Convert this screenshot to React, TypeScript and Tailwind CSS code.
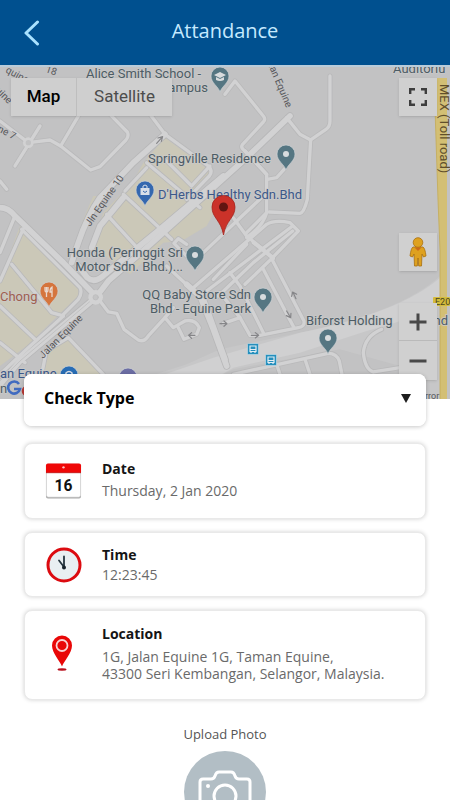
import { useState } from "react";
import type { ReactNode } from "react";

const CHECK_TYPES = ["Check In", "Check Out"];

// Road and block outlines are drawn on a grid three times finer than the map
const MINOR_ROADS = [
  "M0 165 L85 230 L150 222 L182 240 L272 312 L300 302 L378 222 Q388 210 382 198 L330 145",
  "M182 240 L238 145",
  "M450 145 L495 205 L625 300 Q640 315 628 330 L560 400",
  "M0 345 L20 370",
  "M440 290 L600 425",
  "M630 300 L575 360 L500 285",
  "M370 385 L515 520",
  "M320 445 L425 560",
  "M375 375 L440 305",
  "M675 85 L705 45 L790 150 Q798 160 790 168 L728 235 Q720 245 735 255 L800 325",
  "M860 155 L900 205 L932 222 L978 190 Q990 182 990 165 V30",
  "M932 222 L922 400 Q912 440 900 442 L808 438",
  "M735 255 L800 325 V440 Q790 480 740 515",
  "M802 340 L830 335 L857 305",
  "M700 455 L740 510 L820 575",
  "M740 500 L800 440",
  "M610 560 L700 475 L790 390",
  "M560 535 L535 518 L522 532 L590 600",
  "M500 600 L580 675",
  "M580 665 L800 475 Q825 460 870 470 L895 495 L815 578 L735 655",
  "M600 690 L878 480",
  "M655 690 L760 590 L878 495",
  "M640 640 L740 535",
  "M690 620 L720 660 L790 800",
  "M760 530 L820 578",
  "M815 578 L912 765 Q915 782 895 785 L780 808 L750 808 L720 755 L670 772",
  "M790 610 L882 785",
  "M660 680 L720 755",
  "M300 705 L325 738 L350 742 L372 790 L415 822 Q432 830 445 810 L495 755 L520 785 L555 765 Q585 758 598 785 L590 805 L552 820 L535 785",
  "M495 755 L520 725",
  "M70 488 L0 645",
  "M65 490 L240 665 Q248 680 235 700 L190 745",
  "M35 595 L155 740 L190 750",
  "M0 720 L105 820",
  "M0 830 L75 890",
  "M190 750 L80 850 L0 925",
  "M45 450 L0 560",
  "M130 860 L205 815 L310 925",
  "M140 850 L125 925",
  "M120 180 L45 300",
  "M700 925 L985 862 Q1010 862 1018 885 L1028 935",
  "M915 880 L930 925",
  "M830 895 L840 925",
  "M1145 790 Q1095 810 1090 860 Q1095 910 1120 918 L1200 905",
];

const MAJOR_ROADS = [
  "M495 205 L400 290 L300 395 Q262 450 235 530 L215 590",
  "M0 425 Q25 425 45 450 L190 590 L287 690",
  "M0 955 L60 885 L287 695 L325 645 L440 545 L740 275 L870 150",
  "M235 600 L262 635 Q285 655 315 625 L480 490 L670 330",
  "M275 545 L300 480 L370 395",
  "M560 655 L610 700 L675 880",
  "M600 690 L640 790 L680 900",
];

const BLOCKS = [
  "M495 215 L635 318 L590 375 L665 400 L620 480 L545 525 L490 530 L390 625 L350 595 L275 540 L310 440 L400 345 L430 290Z",
  "M60 480 L235 660 L235 690 L80 840 L0 900 V640Z",
  "M205 820 L300 925 H125 L140 865Z",
  "M300 390 L235 530 L250 460 L280 390Z",
];

type PlacePinProps = { x: number; y: number; color: string; children?: ReactNode };

// x,y is the centre of the round head
function PlacePin({ x, y, color, children }: PlacePinProps) {
  return (
    <g transform={`translate(${x} ${y})`}>
      <path d="M0 15 C-2 9 -9 6 -9 -1 A9 9 0 1 1 9 -1 C9 6 2 9 0 15Z" fill={color} stroke="#ced3d6" strokeWidth="0.7" />
      {children ?? <circle cy="-1" r="3" fill="#d8dcde" />}
    </g>
  );
}

function BusStop({ x, y }: { x: number; y: number }) {
  return (
    <g transform={`translate(${x} ${y})`}>
      <rect x="-5.5" y="-5.5" width="11" height="11" rx="1" fill="#258fbd" stroke="#cfe2eb" strokeWidth="0.6" />
      <path d="M-3 -3 H3 V2.5 H-3Z M-2 2.5 V4 M2 2.5 V4" fill="none" stroke="#e2edf2" strokeWidth="1.2" />
      <path d="M-3 0.5 H3" stroke="#e2edf2" />
    </g>
  );
}

function MapCanvas() {
  return (
    <svg
      viewBox="0 67 450 332"
      preserveAspectRatio="xMidYMid slice"
      className="block h-full w-full font-['Roboto',sans-serif]"
      role="img"
      aria-label="Map of Taman Equine"
    >
      <rect y="65" width="450" height="334" fill="#c2c2c3" />
      <g transform="translate(0 66) scale(0.3333)" fill="none" strokeLinejoin="round" strokeLinecap="round">
        {BLOCKS.map((d) => (
          <path key={d} d={d} fill="#cbc8b8" />
        ))}
        <path
          d="M420 940 L560 895 L660 850 L900 800 Q1200 740 1320 630 V1000 H1200 V900 L1020 850 L700 910 L640 940Z"
          fill="#c7c7c8"
        />
        <path d="M480 930 L640 875 L900 800 Q1200 740 1320 635 V720 Q1200 770 1100 795 L900 860 L700 905 L640 940Z" fill="#d0d0d1" />
        {MINOR_ROADS.map((d) => (
          <path key={d} d={d} stroke="#b9b9ba" strokeWidth="15" />
        ))}
        {MAJOR_ROADS.map((d) => (
          <path key={d} d={d} stroke="#b7b7b8" strokeWidth="22" />
        ))}
        {MINOR_ROADS.map((d) => (
          <path key={d} d={d} stroke="#d2d2d3" strokeWidth="10" />
        ))}
        {MAJOR_ROADS.map((d) => (
          <path key={d} d={d} stroke="#d2d2d3" strokeWidth="17" />
        ))}
        <path d="M0 945 L60 885 L280 698" stroke="#b9b9ba" strokeWidth="2" />
        <circle cx="85" cy="230" r="12" fill="#c2c2c3" stroke="#d2d2d3" strokeWidth="8" />
        <circle cx="287" cy="694" r="22" fill="#d2d2d3" />
        <circle cx="287" cy="694" r="8" fill="#c4c4c5" stroke="#bababb" strokeWidth="2" />
        <g stroke="#858588" strokeWidth="3.5">
          <path d="M470 232 L486 214 M474 216 L488 212 L484 226" />
          <path d="M660 773 H680 M672 765 L681 773 L672 781" />
          <path d="M754 808 H775 M766 800 L776 808 L766 816" />
          <path d="M860 735 L871 754 M859 749 L872 755 L873 742" />
          <path d="M888 698 L879 679 M875 691 L878 678 L890 685" />
          <path d="M585 808 H567 M575 800 L566 808 L575 817" />
        </g>
      </g>

      <path d="M434 78 H447 V399 H440 V250 L438 200Z" fill="#d3bf74" />
      <path d="M434 78 L438 200 L440 250 V399" fill="none" stroke="#c4ab57" strokeWidth="0.8" />
      <rect x="433" y="297" width="17" height="9" rx="1" fill="#d3bc3c" />

      <g fill="#56565a" fontSize="10">
        <text transform="translate(5 72) rotate(28)">quine</text>
        <text transform="translate(45 72) rotate(18)">18</text>
        <text transform="translate(-9 87) rotate(45)">quine</text>
        <text transform="translate(-3 131) rotate(28)">ne 7</text>
        <text transform="translate(90 227) rotate(-55)">Jln Equine 10</text>
        <text transform="translate(43 359) rotate(-45)">Jalan Equine</text>
        <text transform="translate(266 60) rotate(67)">man Equine</text>
        <text x="425" y="399" fontSize="9">rror</text>
        <text x="435" y="305" fontSize="9" fill="#4c4521">E20</text>
      </g>
      <text transform="translate(440 84) rotate(90)" fontSize="13" fill="#604f2c">MEX (Toll road)</text>

      <g fontSize="13" fill="#4d5c65" stroke="#cacaca" strokeWidth="1.5" paintOrder="stroke" strokeLinejoin="round">
        <text x="86" y="78">Alice Smith School -</text>
        <text x="208" y="92" textAnchor="end">Campus</text>
        <text x="393" y="73">Auditoriu</text>
        <text x="148" y="163">Springville Residence</text>
        <text x="158" y="199" fill="#3c5889">D'Herbs Healthy Sdn.Bhd</text>
        <text x="183" y="257" textAnchor="end">Honda (Peringgit Sri</text>
        <text x="183" y="271" textAnchor="end">Motor Sdn. Bhd.)...</text>
        <text x="251" y="299" textAnchor="end">QQ Baby Store Sdn</text>
        <text x="251" y="313" textAnchor="end">Bhd - Equine Park</text>
        <text x="306" y="325">Biforst Holding</text>
        <text x="448" y="325" textAnchor="end">nd</text>
        <text x="0" y="301" fill="#a0604d">Chong</text>
        <text x="0" y="378" fill="#3c5889">an Equine</text>
        <text x="0" y="393" fill="#4d5c65">n</text>
      </g>

      <PlacePin x={220} y={77} color="#557682">
        <path d="M-6 -2 L0 -5 L6 -2 L0 1Z M-4 0 V3 Q0 5 4 3 V0 L0 2Z" fill="#d8dcde" />
      </PlacePin>
      <PlacePin x={286} y={155} color="#557682" />
      <PlacePin x={195} y={256} color="#557682" />
      <PlacePin x={263} y={298} color="#557682" />
      <PlacePin x={328} y={339} color="#557682" />
      <PlacePin x={145} y={191} color="#3568af">
        <path d="M-4.500 -3 H4.500 V4 H-4.500Z" fill="#d9dfe8" />
        <path d="M-2 -3 V-5 Q0 -7 2 -5 V-3" fill="none" stroke="#d9dfe8" />
        <path d="M-2 0 Q0 3 2 0" fill="none" stroke="#3568af" />
      </PlacePin>
      <PlacePin x={49} y={292} color="#d5753d">
        <path
          d="M-4 -5 V-2 Q-4 0 -2.500 0 Q-1 0 -1 -2 V-5 M-2.500 -5 V5 M3 5 V-5 Q1 -4 1 0 H3"
          fill="none"
          stroke="#ead8cd"
          strokeWidth="1.3"
        />
      </PlacePin>
      <PlacePin x={69} y={376} color="#286db5">
        <path d="M-3 0 V-3 Q0 -6 3 -3 V0" fill="none" stroke="#d9dfe8" strokeWidth="1.5" />
      </PlacePin>
      <PlacePin x={128} y={378} color="#6c6ea4">
        <path d="M-3 -4 H3 V0 H-3Z" fill="#d5d5e4" />
      </PlacePin>
      <BusStop x={253} y={349} />
      <BusStop x={271} y={360} />

      <g fill="none" strokeWidth="2.6">
        <path d="M19 384 A6 6 0 1 0 20 389 H14" stroke="#416bc0" />
        <circle cx="27" cy="391" r="4" stroke="#bb3a35" />
      </g>

      <path
        d="M223.500 235 C221 220 212 218 212 207 A11.500 11.500 0 0 1 235 207 C235 218 226 220 223.500 235Z"
        fill="#cb3229"
        stroke="#a3261f"
        strokeWidth="0.8"
      />
      <circle cx="223.500" cy="207" r="4.500" fill="#611511" />
    </svg>
  );
}

function MapControls() {
  return (
    <>
      <div className="absolute left-[11px] top-[11px] flex h-[38px] divide-x divide-[#bebebe] bg-[#cfcfcf] font-['Roboto',sans-serif] text-[17px] shadow-sm">
        <button type="button" className="w-[66px] font-medium text-black">
          Map
        </button>
        <button type="button" className="w-[95px] text-[#4c4c4c]">
          Satellite
        </button>
      </div>

      <button
        type="button"
        aria-label="Toggle fullscreen"
        className="absolute right-[13px] top-[11px] flex size-[38px] items-center justify-center bg-[#d0d0d0] shadow-sm"
      >
        <svg viewBox="0 0 18 18" className="size-[18px]" fill="none" stroke="#3d3d3d" strokeWidth="2.4">
          <path d="M1.200 6 V1.200 H6 M12 1.200 H16.800 V6 M16.800 12 V16.800 H12 M6 16.800 H1.200 V12" />
        </svg>
      </button>

      <button
        type="button"
        aria-label="Street view"
        className="absolute right-[13px] top-[166px] flex size-[38px] items-center justify-center bg-[#d0d0d0] shadow-sm"
      >
        <svg viewBox="0 0 18 30" className="h-[30px] w-[18px]" stroke="#a87010" strokeWidth="0.8">
          <path d="M4 10 H14 Q16 11 17 19 L14.500 20 L13 17 L12.500 29 H9.700 L9 21 L8.300 29 H5.500 L5 17 L3.500 20 L1 19 Q2 11 4 10Z" fill="#dea11f" />
          <circle cx="9" cy="5.500" r="4.800" fill="#dea11f" />
          <path d="M5.500 10.500 H12.500 L9 14Z" fill="#cb6a18" stroke="none" />
        </svg>
      </button>

      <div className="absolute right-[13px] top-[236px] flex w-[38px] flex-col divide-y divide-[#bababa] bg-[#d0d0d0] shadow-sm">
        <button type="button" aria-label="Zoom in" className="flex h-[38px] items-center justify-center">
          <svg viewBox="0 0 18 18" className="size-[18px]" stroke="#484848" strokeWidth="3">
            <path d="M0.500 9 H17.500 M9 0.500 V17.500" />
          </svg>
        </button>
        <button type="button" aria-label="Zoom out" className="flex h-[39px] items-center justify-center">
          <svg viewBox="0 0 18 18" className="size-[18px]" stroke="#484848" strokeWidth="3">
            <path d="M0.500 9 H17.500" />
          </svg>
        </button>
      </div>
    </>
  );
}

function CalendarIcon() {
  return (
    <svg viewBox="0 0 38 38" className="size-[38px]" aria-hidden="true">
      <rect x="1" y="2" width="36" height="35" rx="2" fill="#a9a9a9" />
      <rect x="1.500" y="1.500" width="35" height="34" rx="2" fill="#fff" stroke="#d9d9d9" strokeWidth="0.7" />
      <path d="M1 10.500 V3 Q1 1 3 1 H35 Q37 1 37 3 V10.500Z" fill="#ef0707" />
      <path d="M1 10.500 H37" stroke="#b30606" strokeWidth="0.7" />
      <circle cx="19" cy="5" r="1.200" fill="#ffc4c4" />
      <text x="19" y="29" textAnchor="middle" fontSize="16" fontWeight="700" fill="#111" className="font-['Roboto',sans-serif]">
        16
      </text>
    </svg>
  );
}

function ClockIcon() {
  return (
    <svg viewBox="0 0 36 36" className="size-9" aria-hidden="true">
      <circle cx="18" cy="18" r="16" fill="#e9eff2" stroke="#dc0b10" strokeWidth="3" />
      <path d="M18 20 V9.500 M18 20 L13 13.500" stroke="#263640" strokeWidth="1.800" strokeLinecap="round" />
      <circle cx="18" cy="20.500" r="2" fill="#17232b" />
    </svg>
  );
}

function LocationIcon() {
  return (
    <svg viewBox="0 0 26 36" className="h-9 w-[26px]" aria-hidden="true">
      <path d="M11 31.500 C9 26 1 18 1 10.500 A10 10 0 0 1 21 10.500 C21 18 13 26 11 31.500Z" fill="#e90707" />
      <circle cx="11" cy="10.500" r="5.500" fill="#e90707" stroke="#f9d3d3" strokeWidth="1.800" />
      <ellipse cx="11" cy="34.500" rx="4.500" ry="1.200" fill="#b80d1b" />
    </svg>
  );
}

interface InfoCardProps {
  icon: ReactNode;
  title: string;
  className: string;
  children: ReactNode;
}

function InfoCard({ icon, title, className, children }: InfoCardProps) {
  return (
    <section className={`flex items-center rounded-lg border border-[#e9e9e9] bg-white pl-5 pr-4 shadow-[0_0_4px_rgba(0,0,0,0.18)] ${className}`}>
      <div className="flex w-[37px] shrink-0 justify-center">{icon}</div>
      <div className="ml-5 min-w-0">
        <h2 className="text-sm font-bold text-[#151515]">{title}</h2>
        {children}
      </div>
    </section>
  );
}

export default function App() {
  const [checkType, setCheckType] = useState("");

  return (
    <div className="min-h-screen bg-white font-['Open_Sans',sans-serif]">
      <header className="grid h-[65px] grid-cols-[64px_1fr_64px] items-center bg-[#00508f] text-[#c5eaff]">
        <button type="button" aria-label="Back" className="flex h-full items-center justify-center">
          <svg viewBox="0 0 16 26" className="h-[26px] w-4" fill="none" stroke="#a9e2ff" strokeWidth="3" strokeLinecap="round" strokeLinejoin="round">
            <path d="M13.500 2 L2 13 L13.500 24" />
          </svg>
        </button>
        <h1 className="pb-1 text-center text-xl">Attandance</h1>
      </header>

      <main>
        <div className="relative h-[334px] overflow-hidden border-t-2 border-[#b9ccda]">
          <MapCanvas />
          <MapControls />
        </div>

        <div className="relative -mt-[25px] flex flex-col gap-[13px] px-6">
          <div className="relative mb-1 rounded-lg bg-white shadow-[0_1px_4px_rgba(0,0,0,0.22)]">
            <select
              aria-label="Check Type"
              value={checkType}
              onChange={(e) => setCheckType(e.target.value)}
              className="h-[52px] w-full appearance-none rounded-lg bg-white pb-1 pl-5 pr-10 text-base font-bold text-black"
            >
              <option value="">Check Type</option>
              {CHECK_TYPES.map((type) => (
                <option key={type} value={type}>
                  {type}
                </option>
              ))}
            </select>
            <svg viewBox="0 0 10 9" className="pointer-events-none absolute right-[15px] top-5 h-[9px] w-[10px]" aria-hidden="true">
              <path d="M0 0 H10 L5 9Z" fill="#1d1d1d" />
            </svg>
          </div>

          <InfoCard icon={<CalendarIcon />} title="Date" className="h-[76px]">
            <p className="text-sm leading-6 text-[#6a6a6a]">Thursday, 2 Jan 2020</p>
          </InfoCard>

          <InfoCard icon={<ClockIcon />} title="Time" className="h-[65px]">
            <p className="text-sm text-[#6a6a6a]">12:23:45</p>
          </InfoCard>

          <InfoCard icon={<LocationIcon />} title="Location" className="h-[90px] pb-1">
            <p className="mt-1 text-sm leading-[17px] text-[#6a6a6a]">
              1G, Jalan Equine 1G, Taman Equine,
              <br />
              43300 Seri Kembangan, Selangor, Malaysia.
            </p>
          </InfoCard>
        </div>

        <button type="button" className="mx-auto mt-6 flex flex-col items-center gap-[7px] text-[13px] leading-5 text-[#555]">
          Upload Photo
          <span className="flex size-[82px] items-center justify-center rounded-full bg-[#b2bec5]">
            <svg viewBox="0 0 54 44" className="h-11 w-[54px]" fill="none" stroke="#fff" strokeWidth="3" strokeLinejoin="round" aria-hidden="true">
              <path d="M5 9 H13 Q16 9 17 6 Q18 2 21 2 H33 Q36 2 37 6 Q38 9 41 9 H49 Q52 9 52 12 V39 Q52 42 49 42 H5 Q2 42 2 39 V12 Q2 9 5 9Z" />
              <circle cx="27" cy="26" r="11" />
              <circle cx="10" cy="16" r="2" fill="#fff" stroke="none" />
            </svg>
          </span>
        </button>
      </main>
    </div>
  );
}
